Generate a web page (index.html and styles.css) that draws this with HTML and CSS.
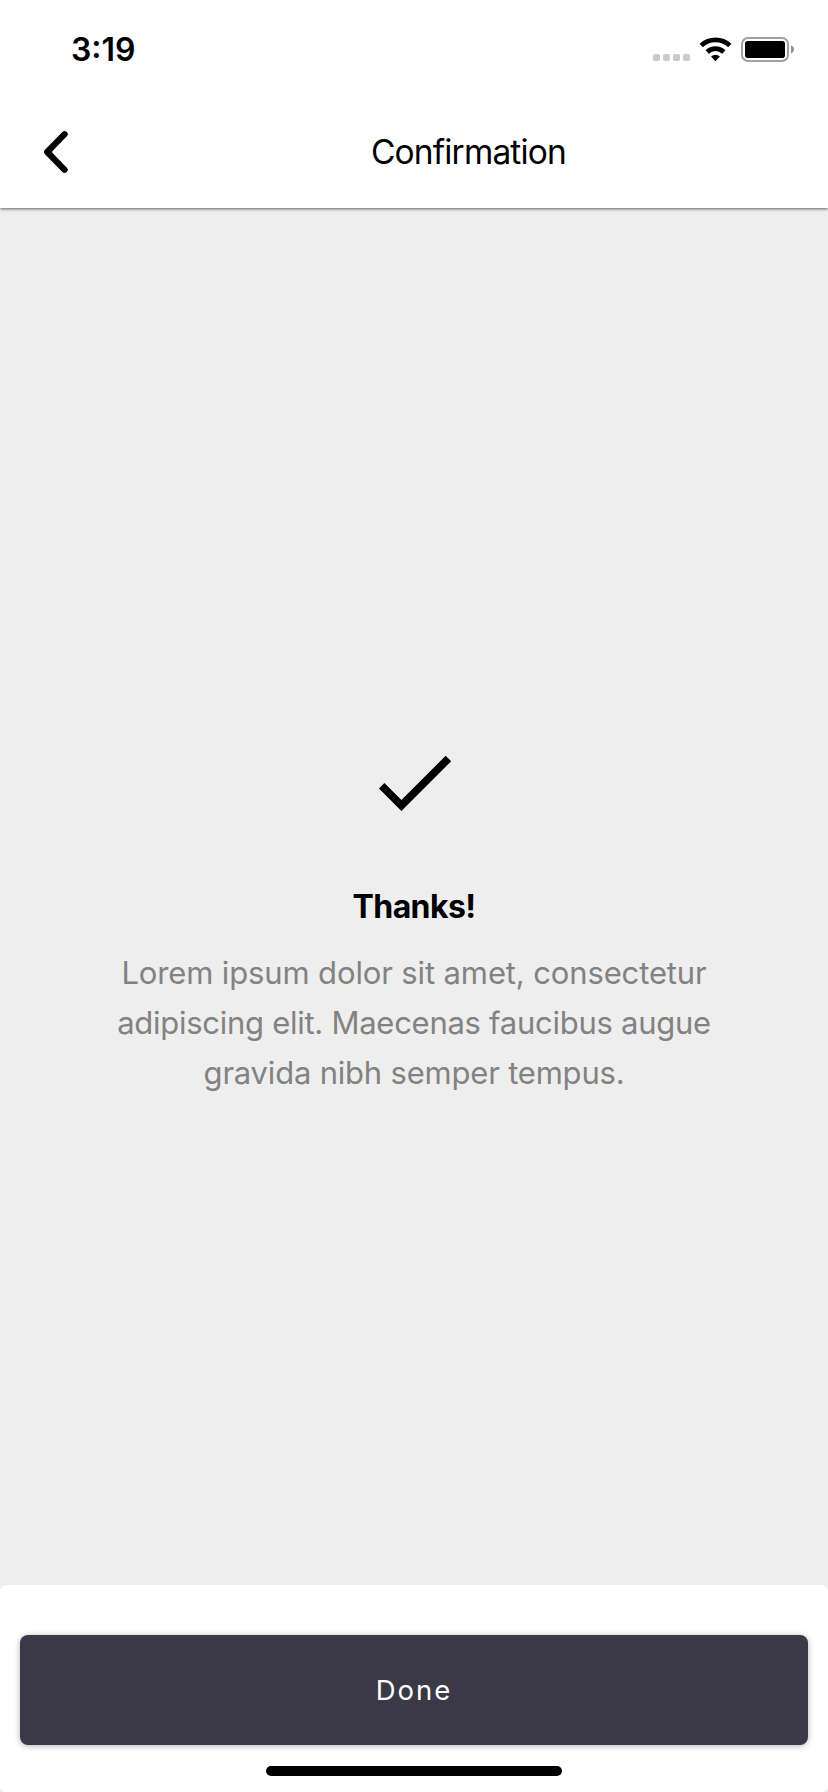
FILE: index.html
```html
<!DOCTYPE html>
<html lang="en">
<head>
<meta charset="utf-8">
<title>Confirmation</title>
<link rel="stylesheet" href="styles.css">
</head>
<body>
<div class="screen">
  <header class="header">
    <div class="status-bar">
      <span class="time">3:19</span>
      <svg class="status-icons" width="142" height="28" viewBox="653 35 142 28">
        <g fill="#cbcbcb">
          <rect x="653" y="54" width="7" height="7" rx="1.8"/>
          <rect x="663" y="54" width="7" height="7" rx="1.8"/>
          <rect x="673" y="54" width="7" height="7" rx="1.8"/>
          <rect x="683" y="54" width="7" height="7" rx="1.8"/>
        </g>
        <g fill="none" stroke="#000" stroke-width="4.8">
          <path d="M701.2 45.4A21 21 0 0 1 729.8 45.4"/>
          <path d="M707.2 51.9A12 12 0 0 1 723.8 51.9"/>
        </g>
        <path d="M715.5 61.2L711.1 56.5A6.6 6.6 0 0 1 719.9 56.5Z"/>
        <rect x="742" y="38" width="46" height="23" rx="6" fill="none" stroke="#a0a0a0" stroke-width="2"/>
        <rect x="745" y="41" width="40" height="17" rx="2.8"/>
        <path d="M791 45.2C795 46.6 795 52 791 53.4Z" fill="#929292"/>
      </svg>
    </div>
    <nav class="nav-bar">
      <button class="back" aria-label="Back">
        <svg width="30" height="44" viewBox="41 130 30 44"><path d="M64.6 134.2L47.2 152L64.6 169.8" fill="none" stroke="#000" stroke-width="6.2" stroke-linecap="round" stroke-linejoin="round"/></svg>
      </button>
      <h1 class="title">Confirmation</h1>
    </nav>
  </header>
  <main class="content">
    <svg class="check" width="74" height="58" viewBox="378 754 74 58"><path d="M379 788.4L384.4 783L401.4 800L445.7 755.7L451.2 761.2L401.4 811Z"/></svg>
    <h2 class="thanks">Thanks!</h2>
    <p class="message"><span class="line line-1">Lorem ipsum dolor sit amet, consectetur</span> <span class="line line-2">adipiscing elit. Maecenas faucibus augue</span> <span class="line line-3">gravida nibh semper tempus.</span></p>
  </main>
  <footer class="footer">
    <button class="done">Done</button>
    <div class="home-indicator"></div>
  </footer>
</div>
</body>
</html>
```
FILE: styles.css
```css
* { box-sizing: border-box; margin: 0; padding: 0; }
body { background: #eee; color: #000; font-family: Inter, "Liberation Sans", sans-serif; }
button { border: 0; background: none; font: inherit; }
svg { display: block; }
.screen { width: 828px; height: 1792px; display: flex; flex-direction: column; overflow: hidden; }
.header { height: 208px; background: #fff; box-shadow: 0 1px 3px rgba(0, 0, 0, .6); }
.status-bar { height: 100px; padding: 0 33px 0 71px; display: flex; justify-content: space-between; align-items: flex-start; }
.time { margin-top: 30px; font-size: 32px; line-height: 40px; font-weight: 600; }
.status-icons { margin-top: 35px; }
.nav-bar { height: 108px; display: flex; align-items: flex-start; }
.back { margin: 30px 0 0 41px; }
.title { margin: 32px 0 0 300px; font-size: 33.5px; line-height: 40px; font-weight: 400; letter-spacing: -.85px; white-space: nowrap; }
.content { flex: 1; display: flex; flex-direction: column; align-items: center; padding-top: 546px; }
.check { margin-left: 2px; }
.thanks { margin-top: 75px; font-size: 32px; line-height: 40px; font-weight: 700; letter-spacing: -.6px; white-space: nowrap; }
.message { margin-top: 21px; font-size: 31px; line-height: 50px; color: #828282; text-align: center; }
.line { display: block; white-space: nowrap; }
.line-1 { letter-spacing: -.13px; }
.line-2 { letter-spacing: -.27px; }
.line-3 { letter-spacing: -.2px; }
.footer { height: 207px; padding: 50px 20px 0; background: #fff; border-radius: 6px; }
.done { display: block; width: 100%; height: 110px; border-radius: 8px; background: #3b3947; color: #fff; font-size: 27.5px; letter-spacing: 2px; box-shadow: 0 1px 6px rgba(0, 0, 0, .3); }
.home-indicator { width: 296px; height: 10px; margin: 21px auto 0; border-radius: 5px; background: #000; }
```
